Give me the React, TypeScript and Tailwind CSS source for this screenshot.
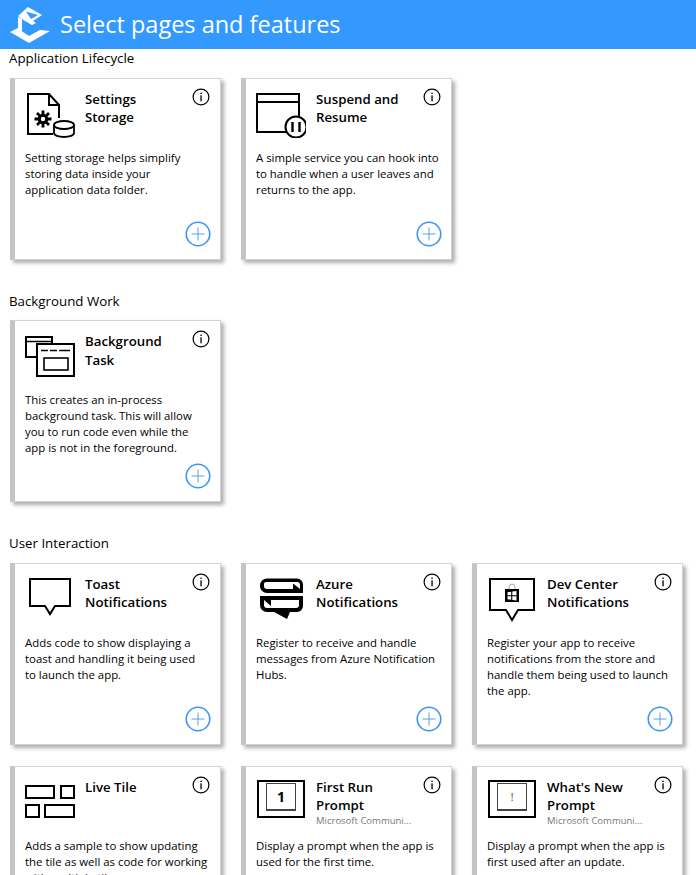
import React from 'react';

const PlusButton = () => (
    <svg width="26" height="26" viewBox="0 0 26 26" fill="none">
        <circle cx="13" cy="13" r="11.75" stroke="#3d96f5" strokeWidth="1.6" />
        <path d="M13 6.5v13M6.5 13h13" stroke="#5a9fe6" strokeWidth="1" />
    </svg>
);

const InfoIcon = () => (
    <svg width="18" height="18" viewBox="0 0 18 18" fill="none">
        <circle cx="9" cy="9" r="7.9" stroke="#000" strokeWidth="1.2" />
        <rect x="8.4" y="4.6" width="1.3" height="1.4" fill="#000" />
        <rect x="8.4" y="7.3" width="1.3" height="6" fill="#000" />
    </svg>
);

const GearDbIcon = () => (
    <svg width="50" height="46" viewBox="0 0 50 46" fill="none">
        <path d="M28 42H3V2h21l10 11v13" stroke="#000" strokeWidth="2" />
        <path d="M24 2v11h10" stroke="#000" strokeWidth="2" />
        <path d="M18 18.500v17M9.500 27h17M12 21l12 12M24 21L12 33" stroke="#000" strokeWidth="2.800" />
        <circle cx="18" cy="27" r="5.200" fill="#000" />
        <circle cx="18" cy="27" r="2.200" fill="#fff" />
        <path d="M29 33v8c0 2.400 4.500 4 10 4s10-1.600 10-4v-8" fill="#fff" stroke="#000" strokeWidth="1.800" />
        <ellipse cx="39" cy="33" rx="10" ry="4" fill="#fff" stroke="#000" strokeWidth="1.800" />
    </svg>
);

const SuspendIcon = () => (
    <svg width="50" height="46" viewBox="0 0 50 46" fill="none">
        <path d="M31 40H1V2h42v24" stroke="#000" strokeWidth="2" />
        <path d="M1 10h42" stroke="#000" strokeWidth="2" />
        <circle cx="40" cy="35" r="10.500" fill="#fff" stroke="#000" strokeWidth="2" />
        <path d="M36.500 30v10M43.500 30v10" stroke="#000" strokeWidth="2.400" />
    </svg>
);

const BackgroundTaskIcon = () => (
    <svg width="50" height="46" viewBox="0 0 50 46" fill="none">
        <path d="M11 23H1V3h26v7" stroke="#000" strokeWidth="2" />
        <path d="M1 7.500h26" stroke="#000" strokeWidth="1.500" />
        <rect x="12" y="10" width="37" height="32" fill="#fff" stroke="#000" strokeWidth="2" />
        <path d="M16 16.500h7M25 16.500h7M34 16.500h11" stroke="#000" strokeWidth="1.600" />
        <rect x="19" y="24" width="24" height="12" stroke="#000" strokeWidth="1.600" />
    </svg>
);

const ToastIcon = () => (
    <svg width="50" height="46" viewBox="0 0 50 46" fill="none">
        <path d="M5 2H45V29H30L25 37L20 29H5Z" stroke="#000" strokeWidth="2" />
    </svg>
);

const AzureIcon = () => (
    <svg width="50" height="46" viewBox="0 0 50 46" fill="none">
        <path d="M11 1.500H41a6 6 0 0 1 6 6V16H11a7 7 0 0 1-7-7V8.500a7 7 0 0 1 7-7z" fill="#000" />
        <path d="M10 5H41a3 3 0 0 1 3 3v4H11a3 3 0 0 1-3-3V7a2 2 0 0 1 2-2z" fill="#fff" />
        <path d="M37 6.500V12h7z" fill="#000" />
        <path d="M4 19H47V29a6 6 0 0 1-6 6H34L31 42 18 35H11a7 7 0 0 1-7-7z" fill="#000" />
        <path d="M8 23H43V28a3 3 0 0 1-3 3H11a3 3 0 0 1-3-3z" fill="#fff" />
        <path d="M8 23h7v6z" fill="#000" />
    </svg>
);

const StoreIcon = () => (
    <svg width="50" height="46" viewBox="0 0 50 46" fill="none">
        <path d="M3 2H47V33H31L25 43L19 33H3Z" stroke="#000" strokeWidth="2" />
        <path d="M22 12v-2a3 3 0 0 1 6 0v2" stroke="#999" strokeWidth="0.800" />
        <path d="M18 12h14v13H18z" fill="#000" />
        <path d="M20.500 15.200l3.700-.5v3.600h-3.700zM25.300 14.500l4.200-.6v4.400h-4.200zM20.500 19.300h3.700v3.500l-3.700-.5zM25.300 19.300h4.200v4.200l-4.200-.6z" fill="#fff" />
    </svg>
);

const LiveTileIcon = () => (
    <svg width="50" height="46" viewBox="0 0 50 46" fill="none">
        <rect x="1" y="6" width="28" height="12" stroke="#000" strokeWidth="2" />
        <rect x="36" y="6" width="13" height="12" stroke="#000" strokeWidth="2" />
        <rect x="1" y="25" width="13" height="12" stroke="#000" strokeWidth="2" />
        <rect x="20" y="25" width="29" height="12" stroke="#000" strokeWidth="2" />
    </svg>
);

const PromptIcon = ({ mark }: { mark: string }) => (
    <div className="w-[48px] h-[38px] ml-[1px] border-[2px] border-black flex items-center justify-center">
        <div className="w-[30px] h-[28px] mb-[3px] border-[1.5px] border-[#444] border-b-2 flex items-center justify-center">
            {mark === '1'
                ? <span className="text-[14px] font-bold text-black leading-none">1</span>
                : <span className="text-[10px] text-[#333] leading-none">{mark}</span>}
        </div>
    </div>
);

const Logo = () => (
    <svg width="42" height="42" viewBox="0 0 42 42" fill="#fff">
        <path d="M1 28L9 24L14 28L20 32L31 26L41 27L20 39Z" />
        <path d="M9 13L13 15V28L9 26Z" />
        <path d="M9 12L19 3L33 11L24 17L27 19L23 21L16 17L13 15Z" />
        <path d="M17 7.500L29 11L22 15Z" fill="#3399ff" />
    </svg>
);

interface CardProps {
    icon: React.ReactNode;
    title: React.ReactNode;
    author?: string;
    text: React.ReactNode;
}

const Card = ({ icon, title, author, text }: CardProps) => (
    <div className="h-[182px] bg-white border border-[#d2d2d2] border-l-[5px] border-l-[#c4c4c4] shadow-[3px_3px_4px_rgba(0,0,0,0.32)] flex flex-col pl-[10px] pr-[10px]">
        <div className="flex h-[71px] pt-[11px]">
            <div className="w-[60px] shrink-0 pt-[2px]">{icon}</div>
            <div className="flex-1">
                <div className="text-[13.25px] leading-[18.5px] font-semibold text-black">{title}</div>
                {author && <div className="text-[9.5px] leading-[11px] text-[#777]">{author}</div>}
            </div>
            <div className="mr-[0.5px] -mt-[2px]"><InfoIcon /></div>
        </div>
        <p className="text-[11.4px] leading-[16px] text-black whitespace-pre-line">{text}</p>
        <div className="mt-auto self-end mb-[12px] -mr-[1px]"><PlusButton /></div>
    </div>
);

const Section = ({ title, children }: { title: string; children: React.ReactNode }) => (
    <section className="pl-[10px] pr-[13px]">
        <h2 className="text-[13.3px] leading-[18px] text-black -ml-[1px]">{title}</h2>
        <div className="grid grid-cols-[211px_211px_211px] gap-x-[20px] gap-y-[21px] mt-[10.5px]">{children}</div>
    </section>
);

export default function App() {
    return (
        <div className="h-[875px] w-[696px] overflow-hidden bg-white" style={{ fontFamily: '"Open Sans", "Noto Sans", sans-serif' }}>
            <header className="h-[49px] bg-[#3399ff] flex items-center pl-[9px] gap-[9px]">
                <Logo />
                <h1 className="text-[23.5px] text-white leading-none">Select pages and features</h1>
            </header>
            <div className="flex flex-col gap-[32px]">
                <Section title="Application Lifecycle">
                    <Card icon={<GearDbIcon />} title={<>Settings<br />Storage</>} text={'Setting storage helps simplify\nstoring data inside your\napplication data folder.'} />
                    <Card icon={<SuspendIcon />} title={<>Suspend and<br />Resume</>} text={'A simple service you can hook into\nto handle when a user leaves and\nreturns to the app.'} />
                </Section>
                <Section title="Background Work">
                    <Card icon={<BackgroundTaskIcon />} title={<>Background<br />Task</>} text={'This creates an in-process\nbackground task.  This will allow\nyou to run code even while the\napp is not in the foreground.'} />
                </Section>
                <Section title="User Interaction">
                    <Card icon={<ToastIcon />} title={<>Toast<br />Notifications</>} text={'Adds code to show displaying a\ntoast and handling it being used\nto launch the app.'} />
                    <Card icon={<AzureIcon />} title={<>Azure<br />Notifications</>} text={'Register to receive and handle\nmessages from Azure Notification\nHubs.'} />
                    <Card icon={<StoreIcon />} title={<>Dev Center<br />Notifications</>} text={'Register your app to receive\nnotifications from the store and\nhandle them being used to launch\nthe app.'} />
                    <Card icon={<LiveTileIcon />} title="Live Tile" text={'Adds a sample to show updating\nthe tile as well as code for working\nwith multiple tiles.'} />
                    <Card icon={<PromptIcon mark="1" />} title={<>First Run<br />Prompt</>} author="Microsoft Communi..." text={'Display a prompt when the app is\nused for the first time.'} />
                    <Card icon={<PromptIcon mark="!" />} title={<>What's New<br />Prompt</>} author="Microsoft Communi..." text={'Display a prompt when the app is\nfirst used after an update.'} />
                </Section>
            </div>
        </div>
    );
}
